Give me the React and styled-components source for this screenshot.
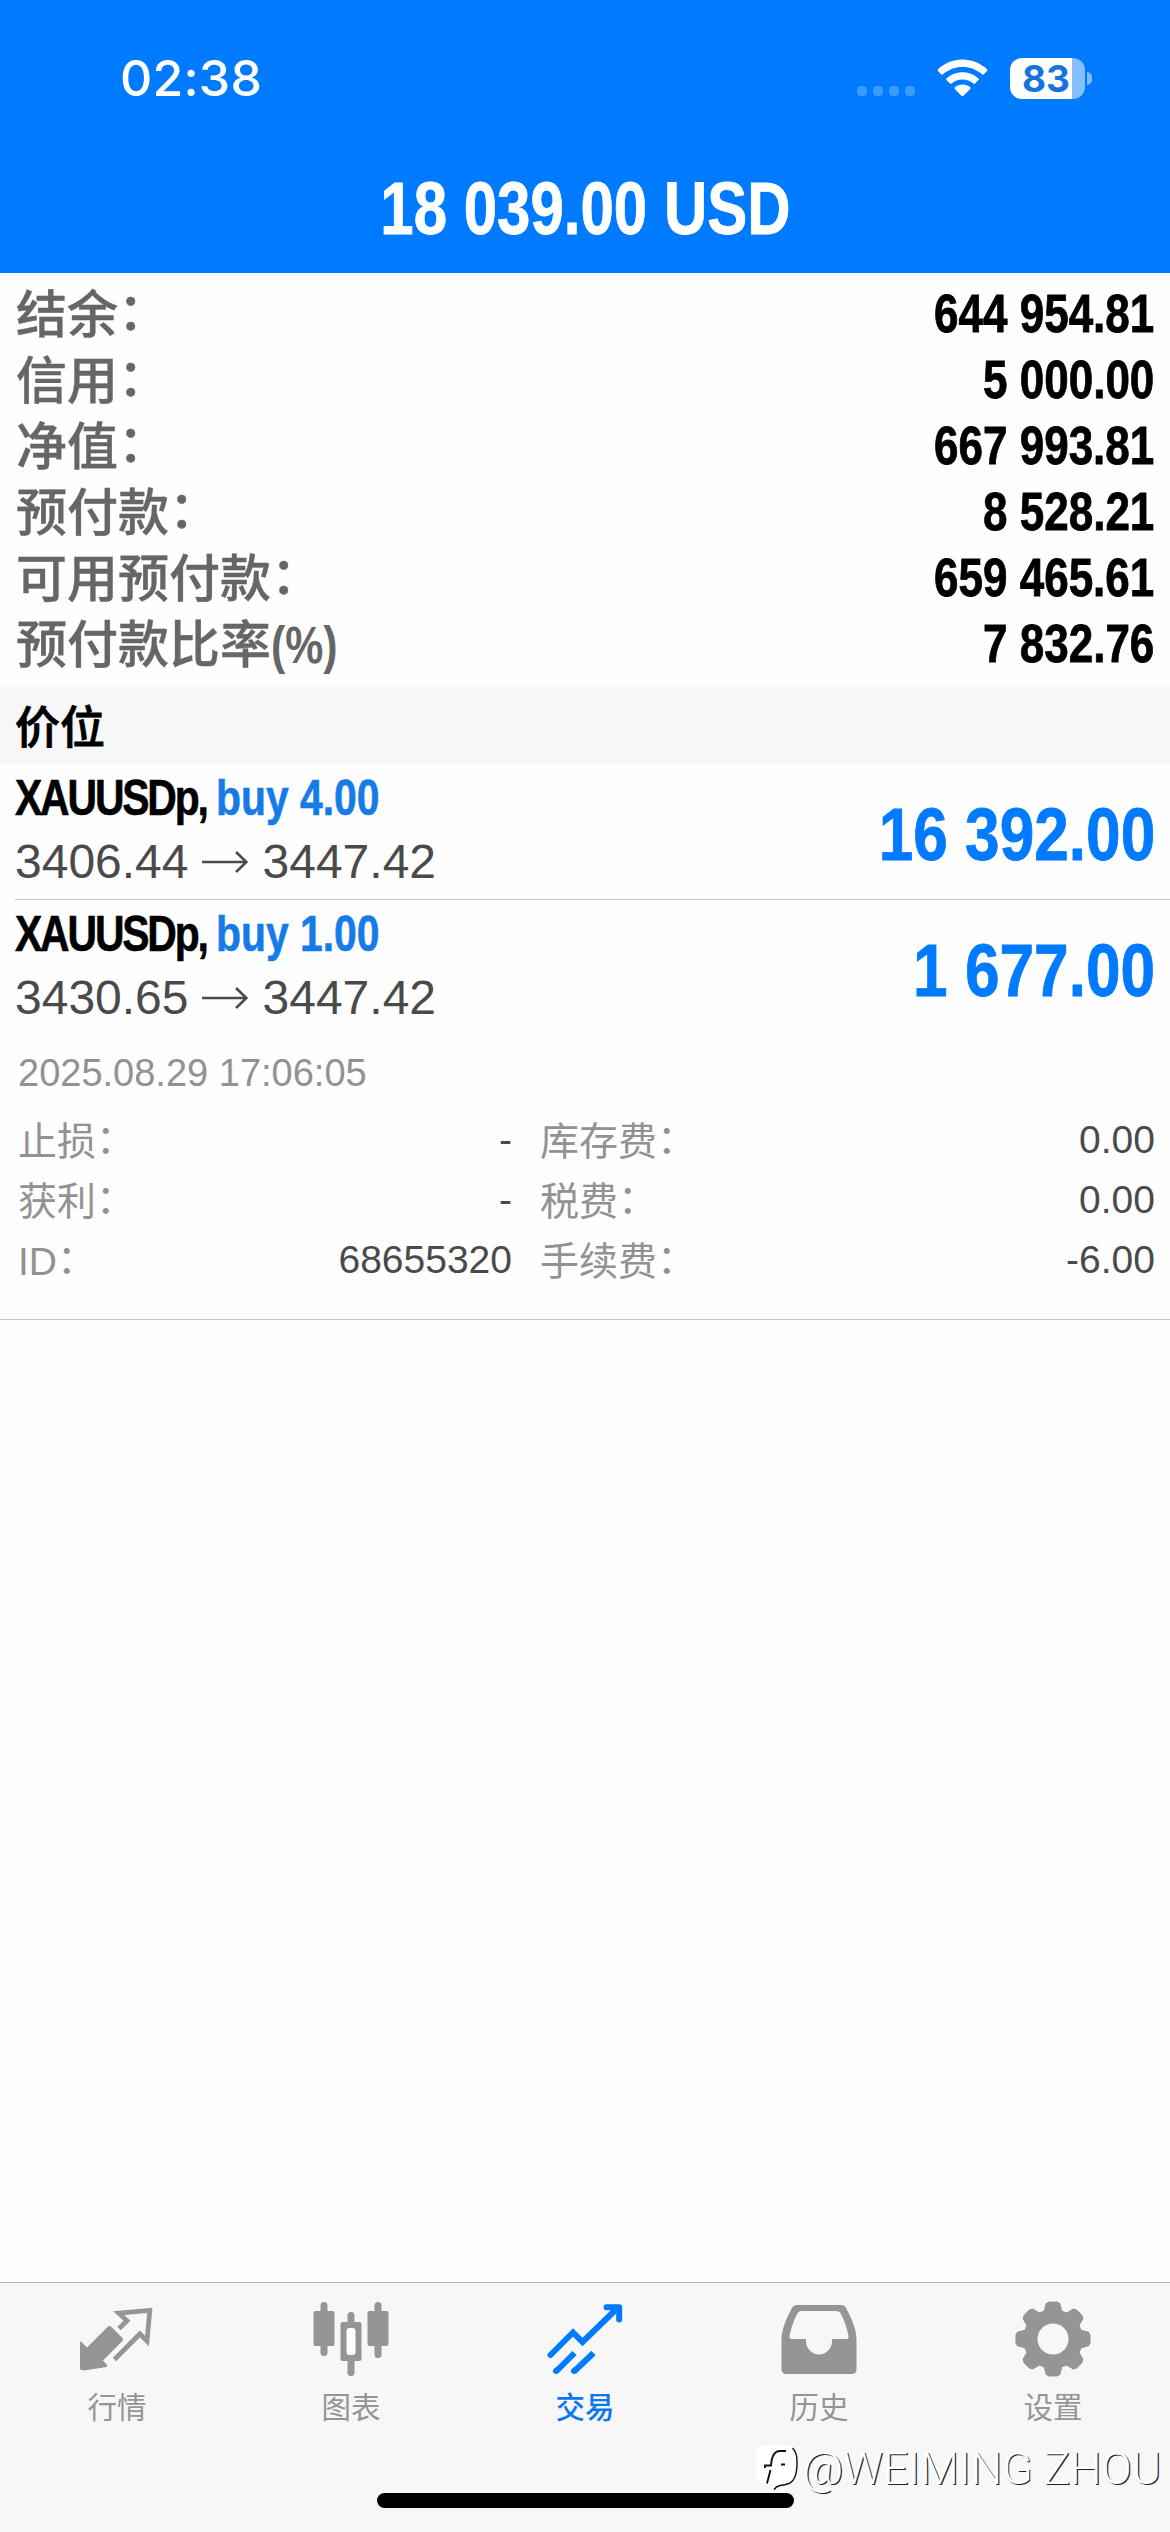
import React from "react";
import styled, { createGlobalStyle } from "styled-components";

const sans = `"Liberation Sans", Arial, "Noto Sans CJK SC", sans-serif`;

const GlobalStyle = createGlobalStyle`
  * { box-sizing: border-box; }
  html, body { margin: 0; padding: 0; background: #fefefe; }
  body { font-family: ${sans}; }
`;

const Screen = styled.div`
  width: 1170px;
  height: 2532px;
  display: flex;
  flex-direction: column;
  overflow: hidden;
  background: #fefefe;
`;

const Header = styled.header`
  height: 273px;
  flex: none;
  background: #007aff;
  color: #fff;
  display: flex;
  flex-direction: column;
`;

const StatusBar = styled.div`
  height: 156px;
  padding: 0 78px 0 120px;
  display: flex;
  justify-content: space-between;
  align-items: center;
`;

const Clock = styled.span`
  font: 500 50px/60px Inter, ${sans};
  letter-spacing: 0.2px;
`;

const StatusIcons = styled.div`
  display: flex;
  align-items: center;
`;

const Condensed = styled.span`
  display: inline-block;
  flex: none;
  white-space: pre;
  font-family: ${sans};
  font-weight: 700;
  font-size: ${(p) => p.$size}px;
  line-height: ${(p) => p.$line}px;
  color: ${(p) => p.$color || "inherit"};
  -webkit-text-stroke: ${(p) => (p.$stroke === undefined ? 0.8 : p.$stroke)}px currentColor;
  transform: scaleX(${(p) => p.$k});
  transform-origin: ${(p) => p.$origin || "right"} center;
`;

const TitleRow = styled.div`
  display: flex;
  justify-content: center;
  padding-top: 10px;
`;

const Summary = styled.section`
  height: 414px;
  flex: none;
  padding: 8px 16px 0;
`;

const SummaryRow = styled.div`
  height: 66px;
  display: flex;
  justify-content: space-between;
  align-items: center;
`;

const SummaryLabel = styled.span`
  padding-bottom: 6px;
  font: 500 51px/60px "Noto Sans CJK SC", sans-serif;
  color: #666;
  -webkit-text-stroke: 0.4px currentColor;
  white-space: pre;
`;

const Colon = styled.span`
  font-family: "Noto Sans CJK JP", sans-serif;
  font-feature-settings: "halt" 1;
`;

const SectionTitle = styled.h2`
  margin: 0;
  height: 77px;
  flex: none;
  padding-left: 15px;
  background: #f7f7f7;
  font: 500 45px/75px "Noto Sans CJK SC", sans-serif;
  -webkit-text-stroke: 0.8px currentColor;
  color: #000;
`;

const Position = styled.div`
  flex: none;
  height: ${(p) => p.$height}px;
  margin-left: ${(p) => p.$inset || 0}px;
  padding-left: ${(p) => 15 - (p.$inset || 0)}px;
  padding-right: 15px;
  border-bottom: 1px solid #c4c4c6;
`;

const PositionMain = styled.div`
  height: 132px;
  display: flex;
  justify-content: space-between;
  align-items: center;
`;

const Instrument = styled.div`
  display: flex;
  flex-direction: column;
  align-items: flex-start;
`;

const Profit = styled.div`
  display: flex;
  padding-top: 9px;
`;

const Symbol = styled.span`
  color: #000;
  letter-spacing: -2.6px;
`;

const Prices = styled.div`
  height: 64px;
  padding-top: 2px;
  display: flex;
  align-items: center;
  font: 400 48px/62px ${sans};
  color: #4a4a4a;
`;

const PriceArrow = styled.svg`
  margin: 0 15px 0 13px;
`;

const OpenTime = styled.div`
  padding: 11px 0 0 3px;
  font: 400 38px/60px ${sans};
  color: #929292;
`;

const Details = styled.div`
  padding: 7px 0 0 3px;
  display: grid;
  grid-template-columns: 494px 1fr;
  column-gap: 28px;
`;

const Detail = styled.div`
  height: 60px;
  display: flex;
  justify-content: space-between;
  align-items: center;
  font: 400 39px/60px ${sans};
`;

const DetailLabel = styled.span`
  color: #929292;
  font-family: "Liberation Sans", "Noto Sans CJK SC", sans-serif;
`;

const DetailValue = styled.span`
  color: #4a4a4a;
`;

const Spacer = styled.div`
  flex: 1;
`;

const Footer = styled.footer`
  position: relative;
  flex: none;
  height: 250px;
  border-top: 1px solid #b5b5b7;
  background: #f7f7f7;
`;

const Tabs = styled.nav`
  display: grid;
  grid-template-columns: repeat(5, 234px);
`;

const Tab = styled.div`
  display: flex;
  flex-direction: column;
  align-items: center;
  padding-top: 18px;
  color: ${(p) => (p.$active ? "#0a78f0" : "#959595")};
  svg { display: block; }
`;

const TabLabel = styled.span`
  margin-top: 8px;
  font: ${(p) => (p.$active ? 500 : 400)} 29.5px/40px "Noto Sans CJK SC", sans-serif;
`;

const HomeIndicator = styled.div`
  position: absolute;
  left: 377px;
  bottom: 24px;
  width: 417px;
  height: 15px;
  border-radius: 8px;
  background: #000;
`;

const Watermark = styled.div`
  position: absolute;
  right: 9px;
  bottom: 35px;
  display: flex;
  align-items: center;
  color: #fff;
  font: 300 44.5px/56px Roboto, ${sans};
  white-space: pre;
  text-shadow: 1.2px 1px 0 #222;
`;

const SignalDots = () => (
  <svg width="62" height="12" viewBox="0 0 62 12">
    {[0, 16, 32, 48].map((x) => (
      <rect key={x} x={x} y="0" width="10" height="10" rx="4" fill="#3d9aff" />
    ))}
  </svg>
);

const SignalBox = styled.div`
  padding-top: 27px;
  margin-right: 18px;
  display: flex;
`;

const WifiIcon = styled.svg`
  margin-right: 22px;
`;

const Wifi = () => (
  <WifiIcon width="51" height="38" viewBox="0 0 51 38" fill="#fff">
    <path d="M25.500 0.500C35 0.500 43.500 4.200 50 10.200Q50.800 11.200 50 12L46.600 15.400Q45.800 16 45 15.300C39.500 10.500 33 8 25.500 8S11.500 10.500 6 15.300Q5.200 16 4.400 15.400L1 12Q.2 11.200 1 10.200C7.500 4.200 16 .5 25.500 .5Z" />
    <path d="M25.500 13.200C31.800 13.200 37.400 15.600 41.600 19.500Q42.300 20.300 41.600 21.100L38 24.600Q37.200 25.200 36.400 24.600C33.400 22 29.700 20.600 25.500 20.600S17.600 22 14.600 24.600Q13.800 25.200 13 24.600L9.400 21.100Q8.700 20.300 9.400 19.500C13.600 15.600 19.200 13.200 25.500 13.200Z" />
    <path d="M25.500 25.500C28.400 25.500 31 26.500 33.200 28.300Q34 29.200 33.200 30L26.300 37Q25.500 37.700 24.700 37L17.800 30Q17 29.200 17.800 28.300C20 26.500 22.600 25.500 25.500 25.500Z" />
  </WifiIcon>
);

const BatteryBody = styled.div`
  width: 75px;
  height: 41px;
  border-radius: 12px;
  background: linear-gradient(90deg, #fff 0 62px, #85bfff 62px);
  color: #1673dd;
  font: 700 37px/41px Inter, ${sans};
  padding-left: 12px;
`;

const BatteryTip = styled.div`
  width: 5px;
  height: 13px;
  margin-left: 2px;
  border-radius: 0 5px 5px 0;
  background: #7dbaff;
`;

const QuotesIcon = () => (
  <svg width="76" height="76" viewBox="0 0 76 76">
    <path d="M1 40.500L2.500 41L8 46.500L29 25.500Q30.500 24.500 32 25.500L43.500 37Q44.500 38.500 43.500 40L24 59.500L28.500 64.500L27.500 66L5 69.500L1 68.500Z" fill="currentColor" />
    <path d="M40 27.500L48 19.700L39.800 12.200L70.800 9.300L68 40L60.800 33L35.500 58.500" fill="none" stroke="currentColor" strokeWidth="4.800" />
  </svg>
);

const ChartIcon = () => (
  <svg width="76" height="76" viewBox="0 0 76 76" fill="currentColor">
    <rect x="7.500" y="1" width="7" height="54" rx="3.500" />
    <rect x=".5" y="10" width="21" height="35" rx="2" />
    <rect x="61.500" y="1" width="7" height="56" rx="3.500" />
    <rect x="54.500" y="10" width="21" height="35" rx="2" />
    <rect x="34.500" y="11" width="7" height="64" rx="3.500" />
    <rect x="27.500" y="21" width="21" height="39" rx="2" />
    <rect x="33.500" y="27" width="9" height="27" rx="3" fill="#fff" />
  </svg>
);

const TradeIcon = () => (
  <svg width="76" height="76" viewBox="0 0 76 76" fill="none" stroke="#007aff" strokeWidth="6">
    <path d="M3.500 54L26 31.500L35.500 41L70 7.500" strokeLinecap="round" />
    <path d="M59.500 6.200H72.200V18.500" strokeLinecap="round" strokeLinejoin="round" strokeWidth="6" />
    <path d="M9 70.500L27.500 52M27 70.500L46.500 52" />
    <path d="M9 70L9.500 69.500M27 70L27.500 69.500" strokeLinecap="round" />
  </svg>
);

const HistoryIcon = () => (
  <svg width="76" height="76" viewBox="0 0 76 76" fill="currentColor" fillRule="evenodd">
    <path d="M16 4H60Q63.500 4 65 7C70.500 17 75.500 28 75.500 39V68Q75.500 73 70.500 73H5.500Q.5 73 .5 68V39C.5 28 5.500 17 11 7Q12.500 4 16 4ZM21 10Q17.500 10 16 13C12.500 20 10 27 8.500 35Q8 38 11 38H25V40A13 13.500 0 0 0 51 40V38H65Q68 38 67.500 35C66 27 63.500 20 60 13Q58.500 10 55 10Z" />
  </svg>
);

const gearPath = (() => {
  const pts = [];
  for (let i = 0; i < 8; i++) {
    [[-18, 29.800], [-11.500, 36.500], [-6, 37.800], [6, 37.800], [11.500, 36.500], [18, 29.800]].forEach(([deg, r]) => {
      const a = ((i * 45 + deg - 90) * Math.PI) / 180;
      pts.push(`${(38 + r * Math.cos(a)).toFixed(2)} ${(38 + r * Math.sin(a)).toFixed(2)}`);
    });
  }
  return `M${pts.join("L")}ZM38 22.500a15.500 15.500 0 1 0 0 31a15.500 15.500 0 1 0 0-31Z`;
})();

const SettingsIcon = () => (
  <svg width="76" height="76" viewBox="0 0 76 76">
    <path d={gearPath} fill="currentColor" fillRule="evenodd" />
  </svg>
);

const WatermarkBadge = () => (
  <svg width="46" height="50" viewBox="0 0 46 50" fill="none">
    <path d="M12 1H32Q41 4 41 17Q41 34 36 37Q32 41 24 41L17 46L16 41Q0 41 0 30V12Q0 1 12 1Z" fill="#fff" />
    <path d="M11 39.500L14.500 26M9 24V21.500H15Q16 7 24 7H30M25 20.500H29" stroke="#111" strokeWidth="1.900" />
    <path d="M36.500 4Q41.500 9 41 19Q41 36 33 39.500Q29 41 24 41.500Q20 42.500 18 45.500" stroke="#111" strokeWidth="1.400" />
  </svg>
);

const summary = [
  ["结余", "644 954.81"],
  ["信用", "5 000.00"],
  ["净值", "667 993.81"],
  ["预付款", "8 528.21"],
  ["可用预付款", "659 465.61"],
  ["预付款比率", "7 832.76", "(%)"],
];

const details = [
  ["止损", "-"],
  ["库存费", "0.00"],
  ["获利", "-"],
  ["税费", "0.00"],
  ["ID", "68655320"],
  ["手续费", "-6.00"],
];

const tabs = [
  ["行情", QuotesIcon],
  ["图表", ChartIcon],
  ["交易", TradeIcon],
  ["历史", HistoryIcon],
  ["设置", SettingsIcon],
];

const PositionHead = ({ volume, from, to, profit }) => (
  <PositionMain>
    <Instrument>
      <Condensed $size={50} $line={62} $k={0.817} $stroke={0.6} $origin="left" $color="#157be8">
        <Symbol>XAUUSDp, </Symbol>buy {volume}
      </Condensed>
      <Prices>
        {from}
        <PriceArrow width="46" height="24" viewBox="0 0 46 24" fill="none" stroke="#4a4a4a" strokeWidth="2.600">
          <path d="M0 12H44M34 2L44.500 12L34 22" />
        </PriceArrow>
        {to}
      </Prices>
    </Instrument>
    <Profit>
      <Condensed $size={74} $line={80} $k={0.84} $color="#007aff">{profit}</Condensed>
    </Profit>
  </PositionMain>
);

export default function App() {
  return (
    <Screen>
      <GlobalStyle />
      <Header>
        <StatusBar>
          <Clock>02:38</Clock>
          <StatusIcons>
            <SignalBox><SignalDots /></SignalBox>
            <Wifi />
            <BatteryBody>83</BatteryBody>
            <BatteryTip />
          </StatusIcons>
        </StatusBar>
        <TitleRow>
          <Condensed $size={75} $line={84} $k={0.8} $origin="center">18 039.00 USD</Condensed>
        </TitleRow>
      </Header>
      <Summary>
        {summary.map(([label, value, suffix]) => (
          <SummaryRow key={label}>
            <SummaryLabel>
              {label}
              {suffix
                ? <Condensed $size={51} $line={40} $k={0.84} $stroke={0} $origin="left">{suffix}</Condensed>
                : <Colon>：</Colon>}
            </SummaryLabel>
            <Condensed $size={53} $line={66} $k={0.83}>{value}</Condensed>
          </SummaryRow>
        ))}
      </Summary>
      <SectionTitle>价位</SectionTitle>
      <Position $height={136} $inset={15}>
        <PositionHead volume="4.00" from="3406.44" to="3447.42" profit="16 392.00" />
      </Position>
      <Position $height={420}>
        <PositionHead volume="1.00" from="3430.65" to="3447.42" profit="1 677.00" />
        <OpenTime>2025.08.29 17:06:05</OpenTime>
        <Details>
          {details.map(([label, value]) => (
            <Detail key={label}>
              <DetailLabel>{label}<Colon>：</Colon></DetailLabel>
              <DetailValue>{value}</DetailValue>
            </Detail>
          ))}
        </Details>
      </Position>
      <Spacer />
      <Footer>
        <Tabs>
          {tabs.map(([label, Icon]) => (
            <Tab key={label} $active={label === "交易"}>
              <Icon />
              <TabLabel $active={label === "交易"}>{label}</TabLabel>
            </Tab>
          ))}
        </Tabs>
        <HomeIndicator />
        <Watermark>
          <WatermarkBadge />
          @WEIMING ZHOU
        </Watermark>
      </Footer>
    </Screen>
  );
}
